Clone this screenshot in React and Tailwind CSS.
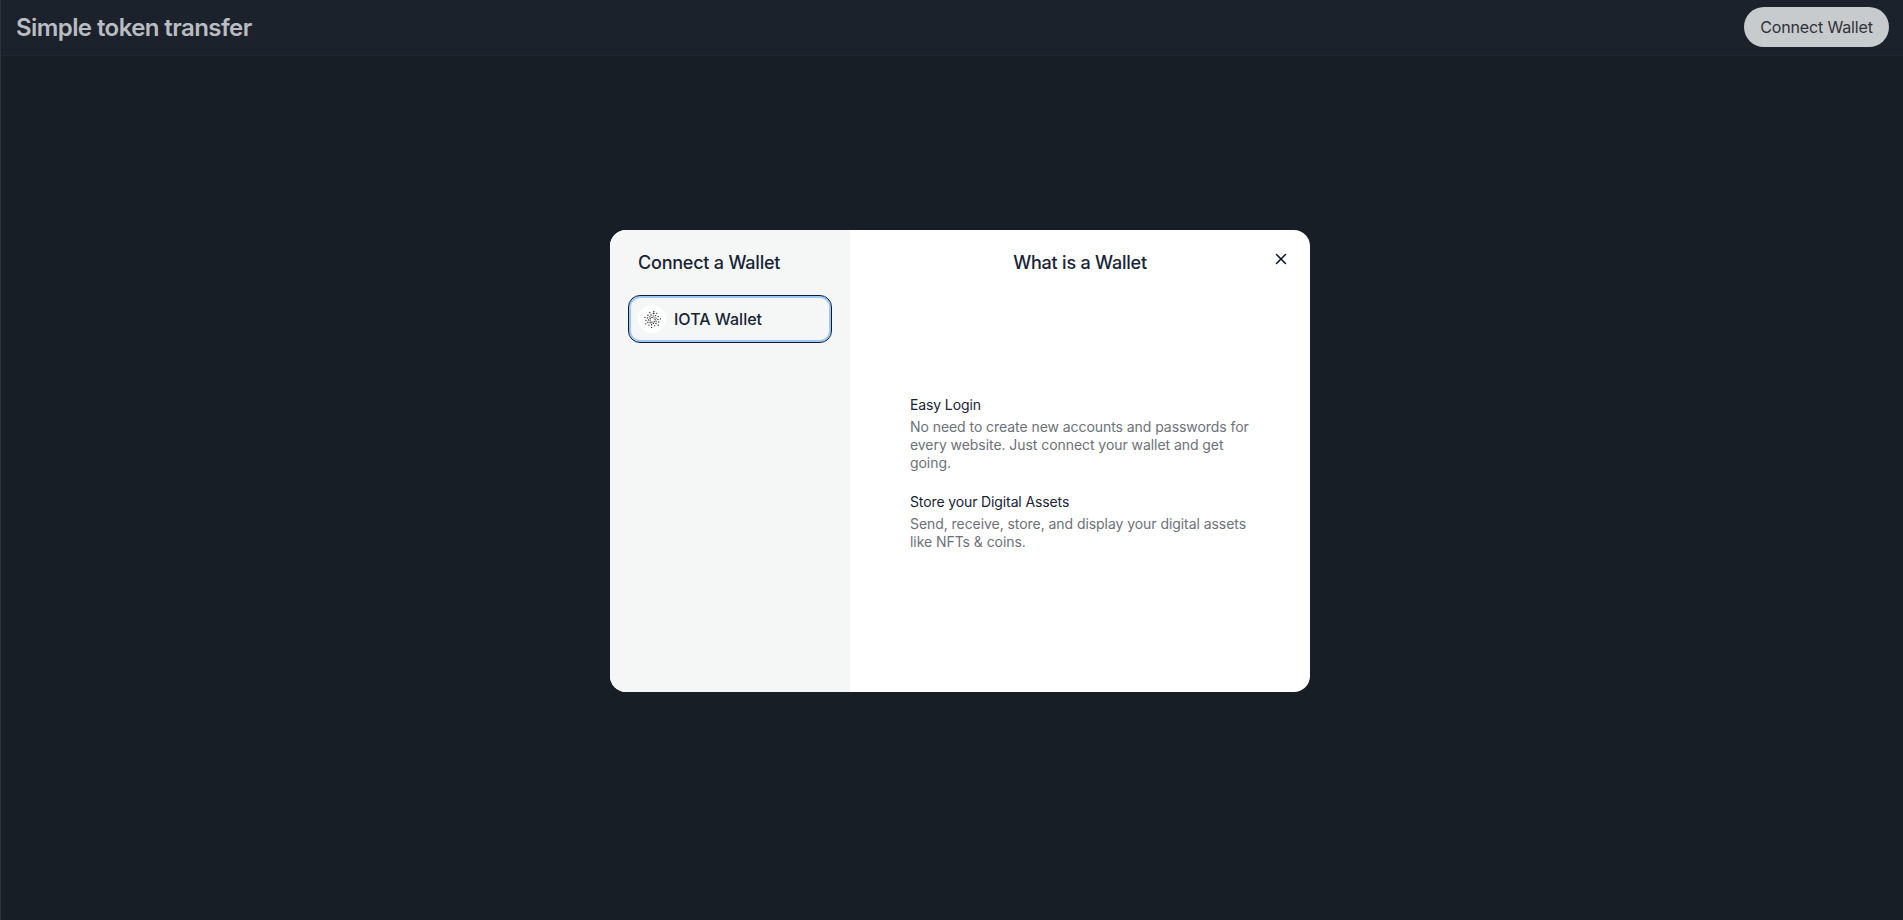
import { X } from "lucide-react";

// IOTA mark: dots running out from the middle along curved arms
const dots = [];
for (let arm = 0; arm < 7; arm++) {
  for (let step = 0; step < 5; step++) {
    const r = 2.6 + step * 1.35;
    const a = (arm / 7) * Math.PI * 2 + step * 0.42;
    dots.push([8.5 + r * Math.cos(a), 8.8 + r * Math.sin(a) * 0.95]);
  }
}
dots.push([9.8, 0.6], [9.9, 2.2]);

function IotaIcon() {
  return (
    <div className="flex h-7 w-7 items-center justify-center rounded-full bg-white">
      <svg width="17" height="17" viewBox="0 0 17 17">
        {dots.map(([x, y], i) => (
          <circle key={i} cx={x} cy={y} r="0.68" fill="#262626" />
        ))}
      </svg>
    </div>
  );
}

function Section({ title, children }) {
  return (
    <div className="flex flex-col gap-1">
      <h3 className="text-sm leading-[19px] font-normal tracking-[-0.12px] text-[#182435]">{title}</h3>
      <p className="text-sm leading-[18px] tracking-[-0.06px] text-[#6d7178]">{children}</p>
    </div>
  );
}

export default function App() {
  return (
    <div className="relative h-screen w-screen overflow-hidden bg-[#171e26] font-['Inter',sans-serif]">
      <header className="flex h-14 items-center justify-between border-b border-[#1f2731] bg-[#1b222c] pr-[14px] pl-4">
        <h1 className="text-2xl leading-8 font-semibold tracking-[-0.58px] text-[#b9bcc1]">Simple token transfer</h1>
        <button className="mb-px h-10 w-[145px] rounded-full bg-[#c8cbce] text-base tracking-[-0.15px] text-[#2f3238]">
          Connect Wallet
        </button>
      </header>

      {/* 1px edge along the left of the window */}
      <div className="absolute top-0 bottom-0 left-0 w-px bg-[#2b323b]" />

      <div className="absolute inset-0 flex items-center justify-center pt-[2px] pl-[17px]">
        <div className="flex h-[462px] w-[700px] overflow-hidden rounded-2xl bg-white">
          <div className="flex w-[240px] flex-col bg-[#f5f7f7] px-5 pt-[17px]">
            <h2 className="px-2 text-lg leading-8 font-medium tracking-[-0.22px] text-[#182435]">Connect a Wallet</h2>
            <div className="mt-4 -mx-[2px] flex h-[48px] w-[204px] items-center gap-2 rounded-xl border border-[#111c2e] bg-[#f5f7f7] px-[9px] shadow-[inset_0_0_0_2px_#9cc8fa]">
              <IotaIcon />
              <span className="text-base font-medium text-[#182435]">IOTA Wallet</span>
            </div>
          </div>

          <div className="relative flex flex-1 flex-col items-center pt-[17px]">
            <h2 className="text-lg leading-8 font-medium tracking-[-0.22px] text-[#182435]">What is a Wallet</h2>
            <div className="mt-[116px] flex w-[360px] flex-col gap-5 pl-[10px]">
              <Section title="Easy Login">
                No need to create new accounts and passwords for every website. Just connect your wallet and get going.
              </Section>
              <Section title="Store your Digital Assets">
                Send, receive, store, and display your digital assets like NFTs & coins.
              </Section>
            </div>
            <button className="absolute top-5 right-5 text-[#0b1320]">
              <X size={18} strokeWidth={2} />
            </button>
          </div>
        </div>
      </div>
    </div>
  );
}
